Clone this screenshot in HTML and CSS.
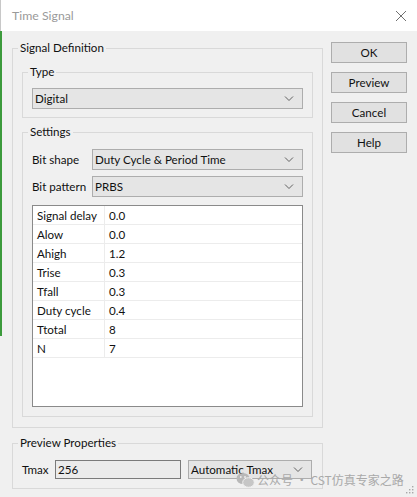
FILE: index.html
```html
<!DOCTYPE html>
<html>
<head>
<meta charset="utf-8">
<link rel="stylesheet" href="styles.css">
</head>
<body>
<div class="window">
  <div class="titlebar">
    <span class="title">Time Signal</span>
    <svg class="close" width="12" height="12" viewBox="0 0 12 12"><path d="M1 1 L11 11 M11 1 L1 11" stroke="#707070" stroke-width="1" fill="none"/></svg>
  </div>
  <div class="content">
    <div class="main">
      <fieldset class="group outer">
        <legend>Signal Definition</legend>
        <fieldset class="group">
          <legend>Type</legend>
          <div class="select"><span>Digital</span><svg class="chev" width="10" height="6" viewBox="0 0 10 6"><path d="M1 0.5 L5 4.5 L9 0.5" stroke="#606060" fill="none"/></svg></div>
        </fieldset>
        <fieldset class="group settings">
          <legend>Settings</legend>
          <div class="field">
            <label class="lbl">Bit shape</label>
            <div class="select grow"><span>Duty Cycle &amp; Period Time</span><svg class="chev" width="10" height="6" viewBox="0 0 10 6"><path d="M1 0.5 L5 4.5 L9 0.5" stroke="#606060" fill="none"/></svg></div>
          </div>
          <div class="field">
            <label class="lbl">Bit pattern</label>
            <div class="select grow"><span>PRBS</span><svg class="chev" width="10" height="6" viewBox="0 0 10 6"><path d="M1 0.5 L5 4.5 L9 0.5" stroke="#606060" fill="none"/></svg></div>
          </div>
          <div class="table">
            <div class="row"><span class="k">Signal delay</span><span class="v">0.0</span></div>
            <div class="row"><span class="k">Alow</span><span class="v">0.0</span></div>
            <div class="row"><span class="k">Ahigh</span><span class="v">1.2</span></div>
            <div class="row"><span class="k">Trise</span><span class="v">0.3</span></div>
            <div class="row"><span class="k">Tfall</span><span class="v">0.3</span></div>
            <div class="row"><span class="k">Duty cycle</span><span class="v">0.4</span></div>
            <div class="row"><span class="k">Ttotal</span><span class="v">8</span></div>
            <div class="row"><span class="k">N</span><span class="v">7</span></div>
          </div>
        </fieldset>
      </fieldset>
      <fieldset class="group outer preview">
        <legend>Preview Properties</legend>
        <div class="field">
          <label class="lbl short">Tmax</label>
          <div class="input">256</div>
          <div class="select auto"><span>Automatic Tmax</span><svg class="chev" width="10" height="6" viewBox="0 0 10 6"><path d="M1 0.5 L5 4.5 L9 0.5" stroke="#606060" fill="none"/></svg></div>
        </div>
      </fieldset>
    </div>
    <div class="buttons">
      <div class="btn">OK</div>
      <div class="btn">Preview</div>
      <div class="btn">Cancel</div>
      <div class="btn">Help</div>
    </div>
  </div>
  <div class="watermark">
    <svg width="19" height="16" viewBox="0 0 19 16"><ellipse cx="7" cy="6.5" rx="6.5" ry="5.5" fill="#b8b8b8"/><ellipse cx="12.5" cy="10.5" rx="5.8" ry="4.8" fill="#c6c6c6" stroke="#f0f0f0" stroke-width="1"/><circle cx="4.8" cy="5" r="0.9" fill="#f0f0f0"/><circle cx="9" cy="5" r="0.9" fill="#f0f0f0"/></svg>
    <span>公众号 · CST仿真专家之路</span>
  </div>
  <svg class="grip" width="9" height="9" viewBox="0 0 9 9"><g fill="#a8a8a8"><rect x="7" y="1" width="1.4" height="1.4"/><rect x="4" y="4" width="1.4" height="1.4"/><rect x="7" y="4" width="1.4" height="1.4"/><rect x="1" y="7" width="1.4" height="1.4"/><rect x="4" y="7" width="1.4" height="1.4"/><rect x="7" y="7" width="1.4" height="1.4"/></g></svg>
  <div class="edge"></div>
</div>
</body>
</html>
```

FILE: styles.css
```css
* { box-sizing: border-box; }
html, body { margin: 0; padding: 0; }
body {
  background: #f0f0f0;
  font-family: Lato, "Noto Sans", "Noto Sans CJK SC", sans-serif;
  font-size: 11.6px;
  color: #111111;
}
.window {
  position: relative;
  width: 417px;
  height: 497px;
  background: #f0f0f0;
  overflow: hidden;
}
.titlebar {
  height: 31px;
  background: #ffffff;
  display: flex;
  align-items: center;
  justify-content: space-between;
  padding: 0 10px 0 11px;
  border-left: 1px solid #c8c8c8;
}
.title { color: #9a9a9a; font-size: 12.3px; }
.close { display: block; }
.content {
  display: flex;
  padding: 11px 0 0 12px;
}
.main { width: 311px; }
.group {
  margin: 0;
  border: 1px solid #d9d9d9;
  padding: 10px 9px 8px 9px;
  min-width: 0;
}
.group legend {
  padding: 0 2px;
  margin-left: -4px;
  line-height: 12px;
  height: 12px;
  white-space: nowrap;
}
.outer { padding: 12px 9px 10px 9px; }
.outer > .group + .group { margin-top: 8px; }
.settings { padding-top: 11px; padding-bottom: 9px; }
.preview { margin-top: 9px; padding: 11px 9px 9px 9px; }
.select {
  height: 21px;
  background: #e5e5e5;
  border: 1px solid #adadad;
  display: flex;
  align-items: center;
  justify-content: space-between;
  padding: 0 8px 0 2px;
  white-space: nowrap;
}
.chev { display: block; flex: none; }
.field {
  display: flex;
  align-items: center;
  margin-bottom: 6px;
}
.lbl { width: 60px; flex: none; white-space: nowrap; }
.short { width: 33px; }
.grow { flex: 1; }
.table {
  margin-top: 8px;
  height: 202px;
  background: #ffffff;
  border: 1px solid #8a8a8a;
}
.row {
  display: flex;
  height: 19px;
  border-bottom: 1px solid #ececec;
  align-items: center;
}
.k {
  width: 72px;
  flex: none;
  padding-left: 4px;
  border-right: 1px solid #ececec;
  height: 100%;
  display: flex;
  align-items: center;
  white-space: nowrap;
}
.v { padding-left: 4px; }
.preview .field { margin-bottom: 0; }
.input {
  width: 126px;
  flex: none;
  height: 19px;
  background: #ebebeb;
  border: 1px solid #7a7a7a;
  padding-left: 2px;
  display: flex;
  align-items: center;
}
.auto { width: 124px; flex: none; margin-left: 7px; height: 19px; }
.buttons {
  margin-left: 8px;
  width: 76px;
  display: flex;
  flex-direction: column;
  gap: 9px;
}
.btn {
  height: 21px;
  background: #e1e1e1;
  border: 1px solid #adadad;
  display: flex;
  align-items: center;
  justify-content: center;
}
.watermark {
  position: absolute;
  left: 236px;
  top: 471px;
  display: flex;
  align-items: center;
  gap: 2px;
  color: #a9a9a9;
  font-size: 12px;
  white-space: nowrap;
  font-family: "Noto Sans CJK SC", sans-serif;
}
.watermark svg { display: block; }
.grip { position: absolute; right: 3px; bottom: 3px; }
.edge {
  position: absolute;
  left: 0;
  top: 31px;
  width: 2px;
  height: 305px;
  background: #3c9a3c;
}
```
